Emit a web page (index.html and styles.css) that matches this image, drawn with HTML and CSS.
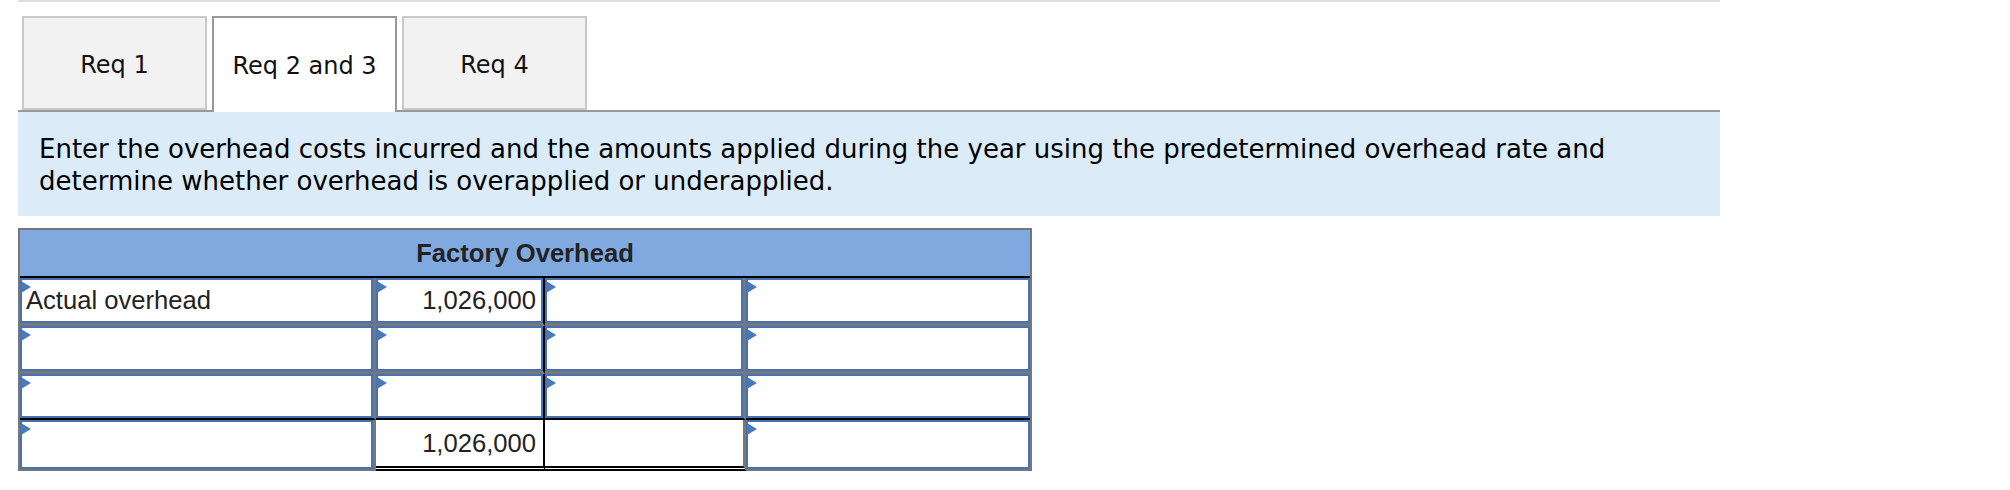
FILE: index.html
```html
<!doctype html>
<html>
    <head>
        <meta charset="utf-8" />
        <title>Factory Overhead</title>
        <link rel="stylesheet" href="styles.css">
    </head>
    <body>
        <div class="page">
            <div class="top-rule"></div>

            <div class="tabs">
                <div class="tab">Req 1</div>
                <div class="tab active">Req 2 and 3</div>
                <div class="tab">Req 4</div>
            </div>

            <div class="instructions">
                Enter the overhead costs incurred and the amounts applied
                during the year using the predetermined overhead rate and
                determine whether overhead is overapplied or underapplied.
            </div>

            <table class="account">
                <thead>
                    <tr>
                        <th colspan="4">Factory Overhead</th>
                    </tr>
                </thead>
                <tbody>
                    <tr>
                        <td class="c1"><div class="field w1">Actual overhead</div></td>
                        <td class="c2"><div class="field w2 num">1,026,000</div></td>
                        <td class="c3"><div class="field w3"></div></td>
                        <td class="c4"><div class="field w4"></div></td>
                    </tr>
                    <tr>
                        <td class="c1"><div class="field w1"></div></td>
                        <td class="c2"><div class="field w2 num"></div></td>
                        <td class="c3"><div class="field w3"></div></td>
                        <td class="c4"><div class="field w4"></div></td>
                    </tr>
                    <tr class="last-entry">
                        <td class="c1"><div class="field w1"></div></td>
                        <td class="c2"><div class="field w2 num"></div></td>
                        <td class="c3"><div class="field w3"></div></td>
                        <td class="c4"><div class="field w4"></div></td>
                    </tr>
                    <tr class="total">
                        <td class="c1"><div class="field w1"></div></td>
                        <td class="c2 sum">1,026,000</td>
                        <td class="c3 sum"></td>
                        <td class="c4"><div class="field w4"></div></td>
                    </tr>
                </tbody>
            </table>
        </div>
    </body>
</html>
```

FILE: styles.css
```css
body {
    margin: 0;
    background: #fff;
    color: #000;
    font-family: "DejaVu Sans", Verdana, sans-serif;
}

.page {
    width: 1702px;
    margin-left: 18px;
}

.top-rule {
    height: 2px;
    background: #dedede;
}

/* Tabs */
.tabs {
    display: flex;
    align-items: flex-start;
    gap: 5px;
    margin-top: 14px;
    padding-left: 4px;
    border-bottom: 2px solid #999;
}

.tab {
    width: 185px;
    height: 94px;
    box-sizing: border-box;
    padding-top: 4px;
    border: 2px solid #c9c9c9;
    background: #f2f2f2;
    display: flex;
    align-items: center;
    justify-content: center;
    font-size: 24px;
    color: #111;
}

.tab.active {
    height: 96px;
    margin-bottom: -2px;
    padding-top: 2px;
    border-color: #999;
    border-bottom: 0;
    background: #fff;
}

/* Instructions */
.instructions {
    background: #dcebf8;
    padding: 21px 20px 19px 21px;
    font-size: 26px;
    line-height: 32px;
    color: #000;
}

/* T-account table */
.account {
    margin-top: 12px;
    border-collapse: separate;
    border-spacing: 0;
    border: 2px solid #777;
    border-bottom: 0;
    font-family: "Liberation Sans", Arial, sans-serif;
    font-size: 25.6px;
    color: #222;
}

.account th {
    height: 46px;
    padding: 0;
    background: #80aadf;
    border-bottom: 2px solid #000;
    font-weight: bold;
    text-align: center;
}

.account td {
    padding: 0;
    vertical-align: top;
    border-bottom: 3px solid #777;
}

.account td.c1,
.account td.c3 {
    border-right: 3px solid #777;
}

.account td.c2 {
    border-right: 2px solid #000;
}

.account .last-entry td {
    border-bottom: 2px solid #000;
}

.account .total td {
    border-bottom: 2px solid #777;
}

.account .total td.sum {
    border-bottom: 5px double #000;
    vertical-align: middle;
    text-align: right;
    padding-right: 7px;
    background: #fff;
}

.field {
    position: relative;
    box-sizing: border-box;
    height: 45px;
    border: 2px solid #4672b4;
    background: #fff;
    display: flex;
    align-items: center;
    padding: 0 4px;
    white-space: nowrap;
}

.field::before {
    content: "";
    position: absolute;
    left: -1px;
    top: 1px;
    border-left: 10px solid #4a78bd;
    border-top: 6px solid transparent;
    border-bottom: 6px solid transparent;
}

.last-entry .field {
    height: 44px;
}

.total .field {
    height: 49px;
}

.field.num {
    justify-content: flex-end;
    padding-right: 5px;
}

.w1 { width: 353px; }
.w2 { width: 167px; }
.w3 { width: 198px; }
.w4 { width: 284px; }
```
